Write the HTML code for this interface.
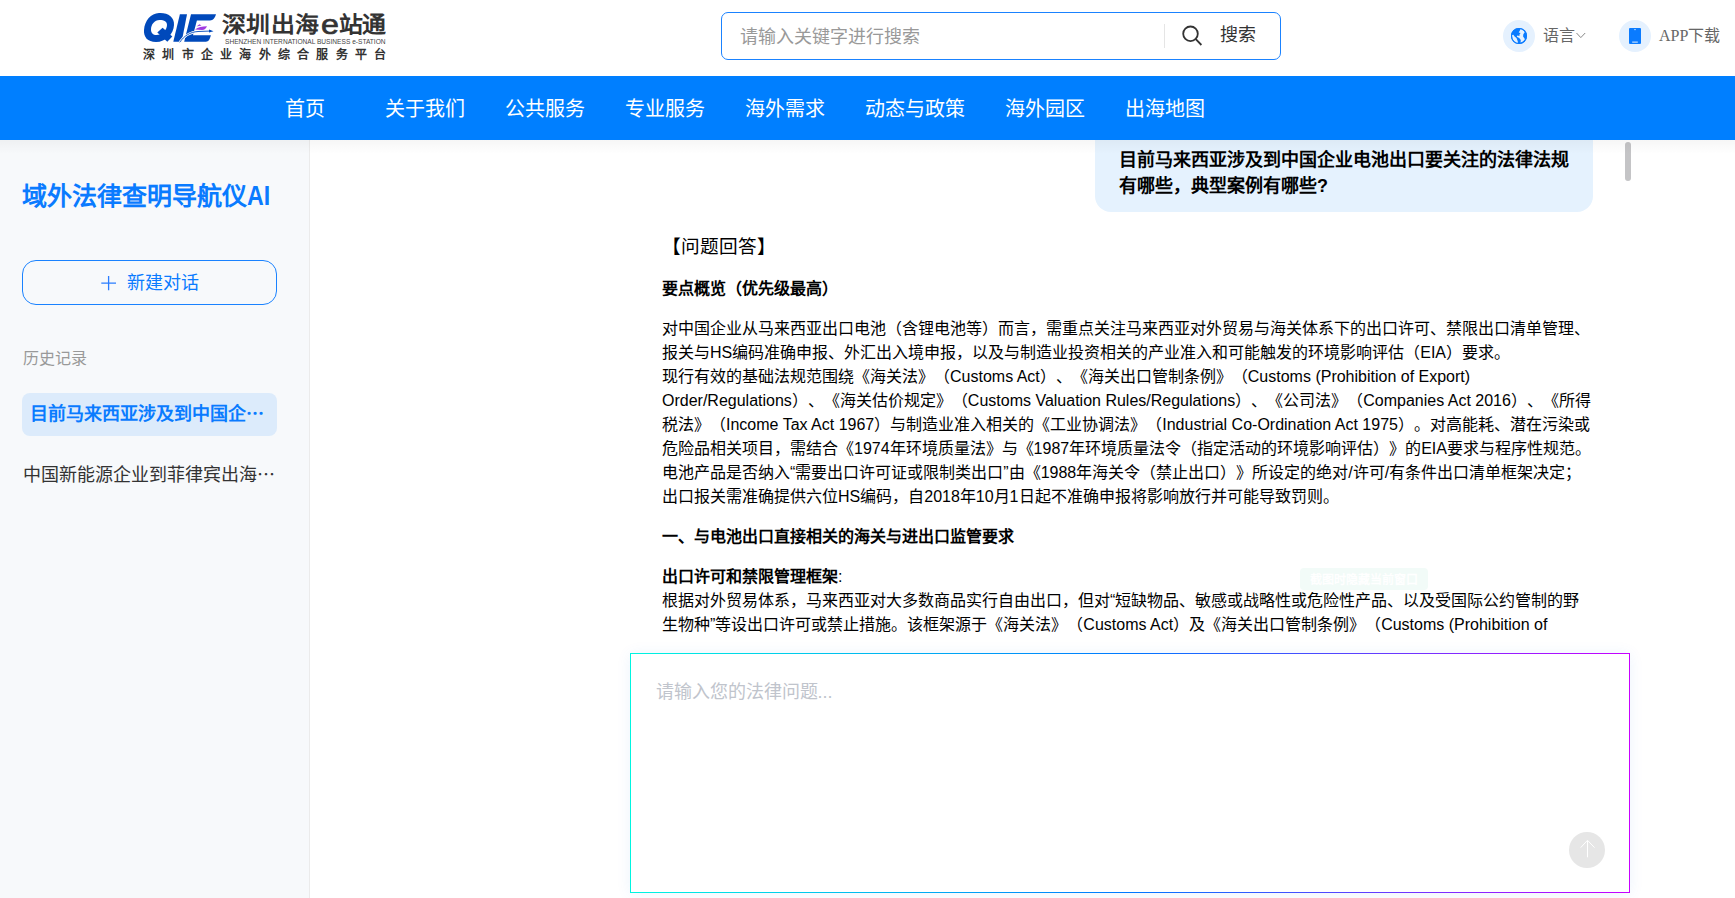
<!DOCTYPE html>
<html lang="zh-CN">
<head>
<meta charset="utf-8">
<title>域外法律查明导航仪AI</title>
<style>
*{margin:0;padding:0;box-sizing:border-box;}
html,body{width:1735px;height:898px;overflow:hidden;background:#fff;font-family:"Liberation Sans",sans-serif;text-spacing-trim:space-all;}
.abs{position:absolute;}
#header{position:absolute;left:0;top:0;width:1735px;height:76px;background:#fff;}
#nav{z-index:5;position:absolute;left:0;top:76px;width:1735px;height:64px;background:#007fff;}
#nav span{position:absolute;top:1px;height:64px;line-height:64px;font-size:20px;color:#fff;white-space:nowrap;}
#sidebar{position:absolute;left:0;top:140px;width:310px;height:758px;background:#f7f9fb;border-right:1px solid #ebebeb;}
#main{position:absolute;left:310px;top:140px;width:1425px;height:758px;background:#fff;}
.shadow-top{z-index:6;position:absolute;left:0;top:140px;width:1735px;height:14px;background:linear-gradient(rgba(0,0,0,0.035),rgba(0,0,0,0));pointer-events:none;}
.line{position:absolute;left:662px;white-space:nowrap;font-size:16px;line-height:24px;color:#000;}
.b{font-weight:bold;}
.lg{top:10.5px;font-size:23px;line-height:30px;font-weight:bold;color:#333;white-space:nowrap;transform:scale(1.04,0.93);transform-origin:0 0;}
</style>
</head>
<body>
<div id="header">
  <!-- logo -->
  <svg class="abs" style="left:140px;top:8px" width="80" height="40" viewBox="140 8 80 40">
    <g fill="#0049bb">
      <path fill-rule="evenodd" d="M159 13 C168 12.5 174.5 17 174 25 C173.6 34 166 42 156 42 C147.5 42 143.5 37 144 30 C144.6 20.5 151 13.3 159 13 Z M159.5 20 C154.5 20 151 24.5 151 29.5 C151 33 153 35 156.5 35 C162 35 167 30 167 25 C167 21.8 164.5 20 159.5 20 Z"/>
      <polygon points="157.3,32.6 162.6,27.7 172.3,36.5 167.3,41.8"/>
      <polygon points="179.9,14.3 187,14.3 181.7,41.8 173.3,41.8"/>
      <path d="M191 14.3 L216 14.3 C215 18 213 20.5 210 20.5 L196.9 20.5 L193 35.3 L210.9 35.3 C210 39 208.5 41.8 206 41.8 L184.2 41.8 Z"/>
    </g>
    <path d="M179.7 42.3 C184 36 190 32 198 31.5 L211 31" stroke="#fff" stroke-width="2.4" fill="none"/>
    <path d="M179.7 42.3 C184 36 190 32 198 31.5 L211 31" stroke="#0049bb" stroke-width="0.9" fill="none"/>
    <polygon points="209,29.5 213.5,31.2 209,32.6" fill="#0049bb"/>
    <path d="M195 29.5 C198 27 202 26.3 207 26.2 C206 28.5 204.5 29.8 202 29.9 Z M196.5 26.5 L199.5 24.3 L201.5 25.5 Z" fill="#a03be0"/>
  </svg>
  <div class="abs lg" style="left:222.4px">深</div>
  <div class="abs lg" style="left:245.8px">圳</div>
  <div class="abs lg" style="left:271.1px">出</div>
  <div class="abs lg" style="left:295.2px">海</div>
  <div class="abs lg" style="left:339.3px">站</div>
  <div class="abs lg" style="left:362.1px">通</div>
  <div class="abs" style="left:320.7px;top:8px;font-size:27.5px;line-height:34px;font-weight:normal;-webkit-text-stroke:0.7px #333;color:#333;transform:scaleX(1.17);transform-origin:0 0">e</div>

  <div class="abs" style="left:225px;top:38px;font-size:6.6px;line-height:8px;color:#444;white-space:nowrap;letter-spacing:0px">SHENZHEN INTERNATIONAL BUSINESS e-STATION</div>
  <div class="abs" style="left:143px;top:47px;font-size:12px;line-height:16px;font-weight:bold;color:#333;white-space:nowrap;letter-spacing:7.25px">深圳市企业海外综合服务平台</div>

  <!-- search -->
  <div class="abs" style="left:721px;top:12px;width:560px;height:48px;border:1px solid #1a82ff;border-radius:7px;"></div>
  <div class="abs" style="left:740px;top:13px;height:48px;line-height:48px;font-size:18px;color:#999;white-space:nowrap">请输入关键字进行搜索</div>
  <div class="abs" style="left:1164px;top:24px;width:1px;height:24px;background:#e5e5e5"></div>
  <svg class="abs" style="left:1180px;top:24px" width="24" height="24" viewBox="0 0 24 24">
    <circle cx="10.5" cy="9.8" r="7.3" stroke="#333" stroke-width="1.8" fill="none"/>
    <line x1="15.8" y1="15.2" x2="21.4" y2="21" stroke="#333" stroke-width="1.8"/>
  </svg>
  <div class="abs" style="left:1220px;top:12px;height:48px;line-height:46px;font-size:18px;color:#333;white-space:nowrap">搜索</div>

  <!-- language -->
  <div class="abs" style="left:1503px;top:20px;width:32px;height:32px;border-radius:50%;background:#e5f1fe"></div>
  <svg class="abs" style="left:1509px;top:26px" width="20" height="20" viewBox="0 0 20 20">
    <circle cx="10" cy="10" r="8" fill="#0a7bff"/>
    <path d="M2.9 8.9 L4.3 8.7 L5.6 10.6 L7.5 12.1 L8.3 13.9 L9.1 16.4 L7.8 17.2 L5.2 15.8 L3.4 12.8 Z" fill="#e5f1fe"/>
    <path d="M11.4 2.9 L13.7 3.5 L15.9 6.0 L14.3 8.3 L14.1 10.5 L16.0 13.3 L14.0 15.6 L11.5 16.8 L11.8 14.0 L10.2 12.0 L7.8 10.7 L8.3 9.6 L10.4 9.9 L10.6 8.3 L11.6 7.0 L9.7 6.4 L10.9 4.4 Z" fill="#e5f1fe"/>
    <circle cx="10" cy="10" r="7.5" stroke="#0a7bff" stroke-width="1.1" fill="none"/>
  </svg>
  <div class="abs" style="left:1543px;top:20px;height:32px;line-height:31px;font-size:16px;color:#666;white-space:nowrap">语言</div>
  <svg class="abs" style="left:1575px;top:31px" width="12" height="9" viewBox="0 0 12 9">
    <polyline points="1.5,2 5.8,6.6 10.2,2" stroke="#888" stroke-width="1" fill="none"/>
  </svg>

  <!-- app -->
  <div class="abs" style="left:1619px;top:20px;width:32px;height:32px;border-radius:50%;background:#e5f1fe"></div>
  <svg class="abs" style="left:1629px;top:28px" width="12" height="16" viewBox="0 0 12 16">
    <rect x="0" y="0" width="12" height="16" rx="1" fill="#0a7bff"/>
    <rect x="5.2" y="1.3" width="1.6" height="0.8" fill="#e5f1fe"/>
    <rect x="3.2" y="13.6" width="5.6" height="1" fill="#e5f1fe"/>
  </svg>
  <div class="abs" style="left:1659px;top:20px;height:32px;line-height:31px;font-size:16px;color:#666;white-space:nowrap"><span style="font-family:'Liberation Serif',serif">APP</span>下载</div>
</div>

<div id="nav">
  <span style="left:285px">首页</span>
  <span style="left:385px">关于我们</span>
  <span style="left:505px">公共服务</span>
  <span style="left:625px">专业服务</span>
  <span style="left:745px">海外需求</span>
  <span style="left:865px">动态与政策</span>
  <span style="left:1005px">海外园区</span>
  <span style="left:1125px">出海地图</span>
</div>

<div id="sidebar">
  <div class="abs" style="left:22px;top:36px;font-size:25px;line-height:40px;font-weight:bold;color:#0a7bff;white-space:nowrap">域外法律查明导航仪<span style="display:inline-block;transform:scaleX(0.86);transform-origin:0 50%;font-size:27px">AI</span></div>
  <div class="abs" style="left:22px;top:120px;width:255px;height:45px;border:1px solid #1a82ff;border-radius:14px;"></div>
  <svg class="abs" style="left:101px;top:135px" width="16" height="16" viewBox="0 0 16 16"><path d="M0.3 8.2 H15 M7.6 0.9 V15.3" stroke="#2a7dff" stroke-width="1.3" fill="none"/></svg>
  <div class="abs" style="left:127px;top:121px;height:45px;line-height:44px;font-size:18px;color:#0a7bff;white-space:nowrap">新建对话</div>
  <div class="abs" style="left:22.5px;top:206.5px;font-size:16px;line-height:24px;color:#999;white-space:nowrap">历史记录</div>
  <div class="abs" style="left:22px;top:253px;width:255px;height:43px;border-radius:8px;background:#dcebfb"></div>
  <div class="abs" style="left:30px;top:253px;height:43px;line-height:43px;font-size:18px;font-weight:bold;color:#0a7bff;white-space:nowrap">目前马来西亚涉及到中国企⋯</div>
  <div class="abs" style="left:23px;top:321.5px;height:26px;line-height:26px;font-size:18px;color:#333;white-space:nowrap">中国新能源企业到菲律宾出海⋯</div>
</div>

<div id="main"></div>

<!-- chat -->
<div class="abs" style="left:1095px;top:112px;width:498px;height:100px;border-radius:16px;background:#e5f2fe;"></div>
<div class="abs" style="left:1119px;top:147px;font-size:18px;line-height:26px;font-weight:bold;color:#000;white-space:nowrap">目前马来西亚涉及到中国企业电池出口要关注的法律法规<br>有哪些，典型案例有哪些?</div>

<div class="line" style="top:234px;font-size:18.67px;line-height:26px;left:662px">【问题回答】</div>
<div class="line b" style="top:277px">要点概览（优先级最高）</div>
<div class="line" style="top:317px">对中国企业从马来西亚出口电池（含锂电池等）而言，需重点关注马来西亚对外贸易与海关体系下的出口许可、禁限出口清单管理、</div>
<div class="line" style="top:341px">报关与HS编码准确申报、外汇出入境申报，以及与制造业投资相关的产业准入和可能触发的环境影响评估（EIA）要求。</div>
<div class="line" style="top:365px">现行有效的基础法规范围绕《海关法》（Customs Act）、《海关出口管制条例》（Customs (Prohibition of Export)</div>
<div class="line" style="top:389px">Order/Regulations）、《海关估价规定》（Customs Valuation Rules/Regulations）、《公司法》（Companies Act 2016）、《所得</div>
<div class="line" style="top:413px">税法》（Income Tax Act 1967）与制造业准入相关的《工业协调法》（Industrial Co-Ordination Act 1975）。对高能耗、潜在污染或</div>
<div class="line" style="top:437px">危险品相关项目，需结合《1974年环境质量法》与《1987年环境质量法令（指定活动的环境影响评估）》的EIA要求与程序性规范。</div>
<div class="line" style="top:461px">电池产品是否纳入“需要出口许可证或限制类出口”由《1988年海关令（禁止出口）》所设定的绝对/许可/有条件出口清单框架决定；</div>
<div class="line" style="top:485px">出口报关需准确提供六位HS编码，自2018年10月1日起不准确申报将影响放行并可能导致罚则。</div>
<div class="line b" style="top:525px">一、与电池出口直接相关的海关与进出口监管要求</div>
<div class="line" style="top:565px"><b>出口许可和禁限管理框架</b>:</div>
<div class="line" style="top:589px">根据对外贸易体系，马来西亚对大多数商品实行自由出口，但对“短缺物品、敏感或战略性或危险性产品、以及受国际公约管制的野</div>
<div class="line" style="top:613px">生物种”等设出口许可或禁止措施。该框架源于《海关法》（Customs Act）及《海关出口管制条例》（Customs (Prohibition of</div>

<!-- tooltip watermark -->
<div class="abs" style="left:1300px;top:568px;width:128px;height:22px;border-radius:4px;background:#f2fbf8"></div>
<div class="abs" style="left:1310px;top:571px;font-size:12px;line-height:18px;font-weight:bold;color:#fff;white-space:nowrap">截图时隐藏当前窗口</div>
<!-- scrollbar -->
<div class="abs" style="left:1625px;top:142px;width:5.5px;height:39px;border-radius:3px;background:#c4c4c6"></div>

<div class="shadow-top"></div>

<!-- input -->
<div class="abs" style="left:630px;top:653px;width:1000px;height:240px;box-shadow:0 1px 14px rgba(0,110,230,0.08);background:linear-gradient(90deg,#00f5e0 0%,#0078ff 50%,#c800ff 100%);padding:1px;">
  <div style="width:100%;height:100%;background:#fff"></div>
</div>
<div class="abs" style="left:655.5px;top:679px;font-size:18px;line-height:26px;color:#c0c4cc;white-space:nowrap">请输入您的法律问题...</div>
<div class="abs" style="left:1569px;top:832px;width:36px;height:36px;border-radius:50%;background:#e6e6e6"></div>
<svg class="abs" style="left:1569px;top:832px" width="36" height="36" viewBox="0 0 36 36">
  <path d="M18.5 25.3 L18.5 8.6 M11.7 15.6 L18.5 8.3 L25.5 15.6" stroke="#fff" stroke-width="1" fill="none"/>
</svg>
</body>
</html>
